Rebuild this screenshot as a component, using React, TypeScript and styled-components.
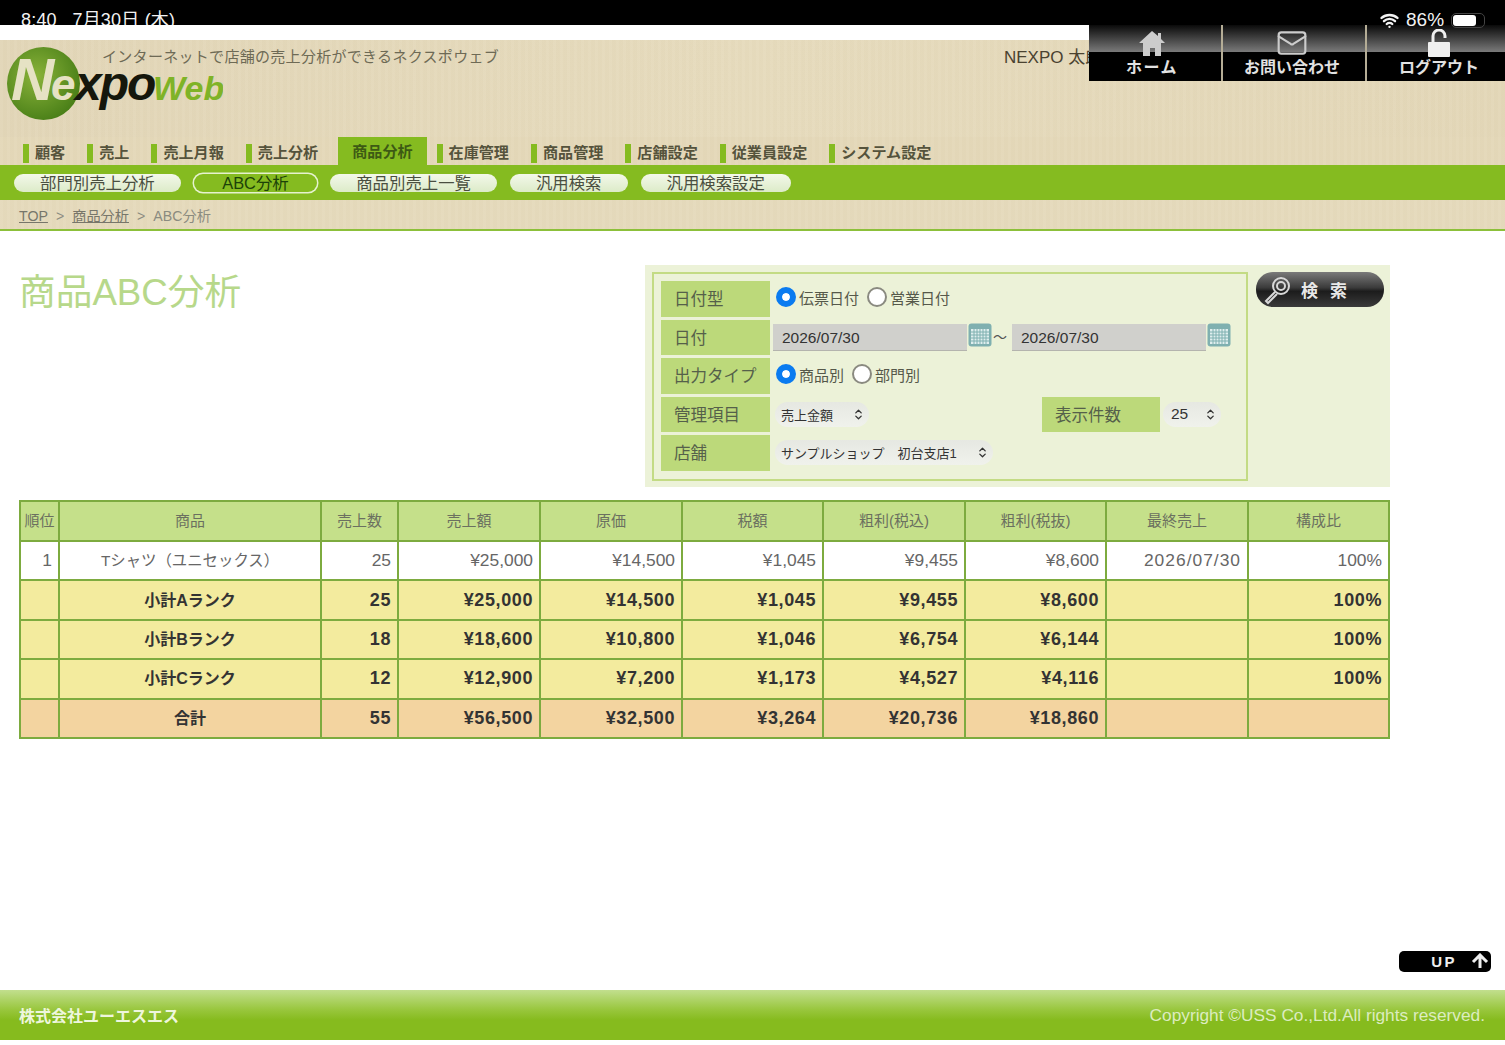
import React from "react";
import styled, { createGlobalStyle } from "styled-components";
import { ChevronsUpDown, Mail, Wifi } from "lucide-react";

const Global = createGlobalStyle`
  html, body { margin: 0; padding: 0; background: #fff; }
  body { font-family: "Liberation Sans", "Noto Sans CJK JP", sans-serif; }
`;

const paper = `repeating-linear-gradient(90deg, rgba(255,255,255,0.025) 0 3px, rgba(120,100,50,0.012) 3px 7px)`;

const Page = styled.div`
  position: relative;
  width: 1505px;
  height: 1045px;
  overflow: hidden;
  display: flex;
  flex-direction: column;
`;
const StatusBar = styled.div`
  height: 25px;
  background: #000;
  color: #f2f2f2;
  font-size: 18px;
  letter-spacing: 0.2px;
  line-height: 20px;
  padding: 10px 0 0 21px;
  box-sizing: border-box;
  overflow: hidden;
  white-space: pre;
`;
const StatusRight = styled.div`
  position: absolute;
  top: 10px;
  left: 1380px;
  display: flex;
  align-items: center;
  gap: 7px;
  color: #f2f2f2;
  font-size: 19px;
  line-height: 20px;
  z-index: 3;
`;
const Battery = styled.span`
  width: 34px;
  height: 15px;
  border: 1px solid #444;
  border-radius: 5px;
  padding: 1px;
  box-sizing: border-box;
  &::before {
    content: "";
    display: block;
    width: 23px;
    height: 11px;
    background: #fff;
    border-radius: 3px;
  }
`;
const WhiteStrip = styled.div`
  height: 15px;
  background: #fff;
`;
const Header = styled.header`
  height: 97px;
  background: ${paper}, linear-gradient(90deg, #e2d6b8, #e6dbbd 50%, #e3d7b8);
  padding: 7px 0 0 7px;
  box-sizing: border-box;
  display: flex;
`;
const Logo = styled.svg`
  width: 216px;
  height: 74px;
  flex: none;
  margin-right: -121px;
`;
const Tagline = styled.div`
  font-size: 15px;
  line-height: 20px;
  color: #6e6a55;
  letter-spacing: 0.3px;
  white-space: nowrap;
  width: 902px;
`;
const UserName = styled.div`
  font-size: 17px;
  line-height: 22px;
  color: #4a4230;
  white-space: nowrap;
`;
const TopNav = styled.nav`
  position: absolute;
  top: 25px;
  left: 1089px;
  width: 416px;
  height: 56px;
  display: flex;
  gap: 2px;
  background: #b5ad96;
  z-index: 2;
`;
const TopNavItem = styled.a<{ $w: number; $shift?: number; $ls?: number }>`
  width: ${(p) => p.$w}px;
  background: linear-gradient(#0a0a0a, #7a7a7a 48%, #000 49%, #000);
  color: #e2e2e2;
  font-size: 16px;
  font-weight: 700;
  letter-spacing: ${(p) => p.$ls ?? 0}px;
  line-height: 20px;
  display: flex;
  flex-direction: column;
  align-items: center;
  justify-content: flex-end;
  padding-bottom: 3px;
  padding-left: ${(p) => Math.max(p.$shift ?? 0, 0)}px;
  padding-right: ${(p) => Math.max(-(p.$shift ?? 0), 0)}px;
  box-sizing: border-box;
`;
const NavIcon = styled.svg`
  width: 32px;
  height: 30px;
  margin-bottom: -1px;
`;
const TabBar = styled.div`
  height: 28px;
  background: ${paper}, #e4d8b9;
  display: flex;
  gap: 22px;
  padding-left: 23px;
  align-items: flex-end;
`;
const Tab = styled.a<{ $active?: boolean }>`
  height: ${(p) => (p.$active ? 28 : 21)}px;
  display: flex;
  align-items: ${(p) => (p.$active ? "center" : "flex-start")};
  font-size: 15.1px;
  font-weight: 700;
  line-height: 17px;
  color: #55533c;
  white-space: nowrap;
  ${(p) =>
    p.$active
      ? `background: #85bb20; color: #3d5a14; padding: 0 14px; margin: 0 -12px 0 -2px;`
      : `&::before {
          content: "";
          width: 6px;
          height: 19px;
          margin-right: 6px;
          background: #85bb20;
        }`}
`;
const SubNav = styled.div`
  height: 35px;
  background: #85bb20;
  display: flex;
  gap: 13px;
  padding: 9px 0 0 14px;
  box-sizing: border-box;
`;
const Pill = styled.a<{ $active?: boolean }>`
  height: 18px;
  padding: 0 ${(p) => (p.$active ? 28.5 : 26)}px;
  border-radius: 9px;
  box-sizing: border-box;
  font-size: 16.4px;
  line-height: 18px;
  white-space: nowrap;
  color: ${(p) => (p.$active ? "#1c4208" : "#4a4f40")};
  background: ${(p) => (p.$active ? "#85bb20" : "linear-gradient(#f3f8ea, #dcebc8)")};
  ${(p) => p.$active && "box-shadow: 0 0 0 1.5px #e6f2cf;"}
`;
const Breadcrumb = styled.div`
  height: 31px;
  background: ${paper}, #e5dabc;
  border-bottom: 2px solid #8cc03a;
  box-sizing: border-box;
  padding: 6px 0 0 19px;
  font-size: 14.2px;
  line-height: 20px;
  color: #8b8b80;
  display: flex;
  gap: 8px;
  a { text-decoration: underline; color: #77766a; }
`;
const Main = styled.main`
  padding: 34px 115px 0 19px;
  display: flex;
  flex-direction: column;
  gap: 13px;
`;
const TopRow = styled.div`
  display: flex;
  justify-content: space-between;
`;
const Title = styled.h1`
  margin: 6px 0 0;
  font-size: 36.7px;
  line-height: 44px;
  font-weight: 400;
  color: #b7d88a;
`;
const SearchPanel = styled.div`
  width: 745px;
  height: 222px;
  background: #ecf2d8;
  padding: 7px 6px 6px 7px;
  box-sizing: border-box;
  display: flex;
  gap: 8px;
`;
const SearchBox = styled.div`
  width: 596px;
  border: 2px solid #c3db84;
  box-sizing: border-box;
  padding: 7px 0 0 7px;
  display: flex;
  flex-direction: column;
  gap: 3px;
`;
const FormRow = styled.div`
  height: 35.5px;
  display: flex;
  align-items: center;
`;
const Label = styled.div<{ $w?: number; $ml?: number }>`
  width: ${(p) => p.$w ?? 109}px;
  height: 100%;
  flex: none;
  margin-left: ${(p) => p.$ml ?? 0}px;
  background: #bcd97a;
  color: #55604a;
  font-size: 16.5px;
  line-height: 37px;
  padding-left: 13px;
  box-sizing: border-box;
  white-space: nowrap;
`;
const RadioGroup = styled.div`
  display: flex;
  align-items: center;
  margin: -3px 0 0 6px;
  font-size: 15px;
  color: #55584a;
`;
const Radio = styled.span<{ $on?: boolean }>`
  width: 20px;
  height: 20px;
  border-radius: 50%;
  box-sizing: border-box;
  margin-right: 3px;
  background: ${(p) => (p.$on ? "#0a7bf0" : "#fff")};
  border: ${(p) => (p.$on ? "6px solid #0a7bf0" : "2px solid #8a8a80")};
  ${(p) => p.$on && "box-shadow: inset 0 0 0 4px #fff;"}
`;
const RadioText = styled.span`
  margin-right: 8px;
`;
const DateInput = styled.div`
  width: 194px;
  height: 27px;
  margin-left: 3px;
  background: #d0d0cc;
  border-bottom: 1px solid #b4b4ae;
  box-sizing: border-box;
  padding-left: 9px;
  font-size: 15.5px;
  line-height: 27px;
  color: #333;
`;
const CalendarIcon = styled.svg`
  width: 24px;
  height: 24px;
  margin: -5px 0 0 1px;
  flex: none;
`;
const Tilde = styled.span`
  width: 17px;
  margin-left: 1px;
  margin-right: -1px;
  font-size: 14px;
  line-height: 20px;
  color: #555;
`;
const SelectPill = styled.div<{ $w: number; $ml?: number; $fs?: number; $pl?: number }>`
  width: ${(p) => p.$w}px;
  height: 25px;
  margin-left: ${(p) => p.$ml ?? 5}px;
  border-radius: 12.5px;
  background: linear-gradient(#e6e8e2, #f0f2ec);
  padding: 0 4px 0 ${(p) => p.$pl ?? 6}px;
  box-sizing: border-box;
  display: flex;
  align-items: center;
  justify-content: space-between;
  font-size: ${(p) => p.$fs ?? 13}px;
  color: #333;
  white-space: pre;
`;
const SearchButton = styled.button`
  width: 128px;
  height: 35px;
  border: none;
  border-radius: 17px;
  background: linear-gradient(#7a7a7a, #3a3a3a 45%, #1c1c1c 55%, #3a3a3a);
  color: #e8e8e8;
  font: 700 17px "Liberation Sans", "Noto Sans CJK JP", sans-serif;
  letter-spacing: 12px;
  display: flex;
  align-items: center;
  padding: 0 0 0 6px;
  gap: 9px;
`;
const Table = styled.table`
  width: 1369px;
  border-collapse: collapse;
  table-layout: fixed;
`;
const Th = styled.th<{ $w: number }>`
  width: ${(p) => p.$w}px;
  height: 40px;
  padding: 0 0 3px;
  background: #c5e08a;
  border: 2px solid #7dab3f;
  font-size: 15px;
  font-weight: 400;
  color: #6b7060;
  text-align: center;
  box-sizing: border-box;
`;
const Tr = styled.tr<{ $kind: "row" | "sub" | "total" }>`
  background: ${(p) => (p.$kind === "row" ? "#fff" : p.$kind === "sub" ? "#f3eb9e" : "#f3d4a0")};
  td {
    font-weight: ${(p) => (p.$kind === "row" ? 400 : 700)};
    color: ${(p) => (p.$kind === "row" ? "#666" : "#333")};
    font-size: ${(p) => (p.$kind === "row" ? 17.4 : 18)}px;
    letter-spacing: ${(p) => (p.$kind === "row" ? 0 : 0.6)}px;
  }
  td.name {
    font-size: ${(p) => (p.$kind === "row" ? 15.4 : 16)}px;
    letter-spacing: 0;
    padding-bottom: 3px;
  }
  td.date {
    letter-spacing: 1px;
  }
`;
const Td = styled.td<{ $center?: boolean }>`
  height: 39.4px;
  padding: 0 6px;
  border: 2px solid #7dab3f;
  text-align: ${(p) => (p.$center ? "center" : "right")};
  box-sizing: border-box;
  white-space: nowrap;
`;
const UpButton = styled.a`
  align-self: flex-end;
  width: 92px;
  height: 21px;
  margin: 212px 14px 0 0;
  border-radius: 5px;
  background: #000;
  color: #eee;
  font-size: 15px;
  font-weight: 700;
  letter-spacing: 2.5px;
  line-height: 21px;
  display: flex;
  align-items: center;
  justify-content: flex-end;
  gap: 13px;
  padding-right: 1px;
  box-sizing: border-box;
`;
const Footer = styled.footer`
  height: 50px;
  margin-top: 18px;
  background: linear-gradient(#c2df8e, #98c63c 40%, #86bb1e 60%);
  padding: 1px 20px 0 19px;
  box-sizing: border-box;
  display: flex;
  align-items: center;
  justify-content: space-between;
`;
const Company = styled.div`
  font-size: 16px;
  font-weight: 700;
  color: #eef6dd;
`;
const Copyright = styled.div`
  font-size: 17.3px;
  color: #dcecc0;
`;

const columns = [
  ["順位", 39], ["商品", 262], ["売上数", 77], ["売上額", 142], ["原価", 142],
  ["税額", 141], ["粗利(税込)", 142], ["粗利(税抜)", 141], ["最終売上", 142], ["構成比", 141],
] as const;

const rows: { kind: "row" | "sub" | "total"; cells: string[] }[] = [
  { kind: "row", cells: ["1", "Tシャツ（ユニセックス）", "25", "¥25,000", "¥14,500", "¥1,045", "¥9,455", "¥8,600", "2026/07/30", "100%"] },
  { kind: "sub", cells: ["", "小計Aランク", "25", "¥25,000", "¥14,500", "¥1,045", "¥9,455", "¥8,600", "", "100%"] },
  { kind: "sub", cells: ["", "小計Bランク", "18", "¥18,600", "¥10,800", "¥1,046", "¥6,754", "¥6,144", "", "100%"] },
  { kind: "sub", cells: ["", "小計Cランク", "12", "¥12,900", "¥7,200", "¥1,173", "¥4,527", "¥4,116", "", "100%"] },
  { kind: "total", cells: ["", "合計", "55", "¥56,500", "¥32,500", "¥3,264", "¥20,736", "¥18,860", "", ""] },
];

const tabs = ["顧客", "売上", "売上月報", "売上分析", "商品分析", "在庫管理", "商品管理", "店舗設定", "従業員設定", "システム設定"];
const subNav = ["部門別売上分析", "ABC分析", "商品別売上一覧", "汎用検索", "汎用検索設定"];

const Calendar = () => (
  <CalendarIcon viewBox="0 0 24 24">
    <rect x="0.5" y="0.5" width="23" height="23" rx="3" fill="#7fb0b0" />
    <rect x="3" y="6" width="18" height="15" fill="#dfeeee" />
    <path d="M3 9h18M3 12h18M3 15h18M3 18h18M6 6v15M9 6v15M12 6v15M15 6v15M18 6v15" stroke="#7fb0b0" strokeWidth="1" />
  </CalendarIcon>
);

const App: React.FC = () => {
  return (
    <Page>
      <Global />
      <StatusBar>8:40   7月30日 (木)</StatusBar>
      <StatusRight>
        <Wifi size={19} strokeWidth={3} />
        <span>86%</span>
        <Battery />
      </StatusRight>
      <WhiteStrip />
      <Header>
        <Logo viewBox="0 0 216 74">
          <defs>
            <radialGradient id="ball" cx="0.4" cy="0.4" r="0.7">
              <stop offset="0" stopColor="#8ab33a" />
              <stop offset="1" stopColor="#437a14" />
            </radialGradient>
          </defs>
          <circle cx="36.5" cy="36.5" r="36.5" fill="url(#ball)" />
          <text x="4" y="53" fontFamily="Liberation Sans" fontStyle="italic" fontWeight="700" fontSize="60" fill="#e6e2c4">N</text>
          <text x="44" y="53" fontFamily="Liberation Sans" fontStyle="italic" fontWeight="700" fontSize="44" fill="#e6e2c4">e</text>
          <text x="68" y="53" fontFamily="Liberation Sans" fontStyle="italic" fontWeight="700" fontSize="48" fill="#15170c" letterSpacing="-2">xpo</text>
          <text x="146" y="53" fontFamily="Liberation Sans" fontStyle="italic" fontWeight="700" fontSize="34" fill="#7fb327">Web</text>
        </Logo>
        <Tagline>インターネットで店舗の売上分析ができるネクスポウェブ</Tagline>
        <UserName>NEXPO 太郎</UserName>
      </Header>
      <TopNav>
        <TopNavItem $w={132} $shift={-6} $ls={1.5}>
          <NavIcon viewBox="0 0 32 30">
            <path d="M16 2 3 14h4v13h7v-8h5v8h6V14h4l-4-4V4h-3v3z" fill="#ccc" />
          </NavIcon>
          ホーム
        </TopNavItem>
        <TopNavItem $w={142} $shift={-4}>
          <Mail size={32} strokeWidth={1.6} color="#ccc" style={{ marginBottom: -1 }} />
          お問い合わせ
        </TopNavItem>
        <TopNavItem $w={138} $shift={6}>
          <NavIcon viewBox="0 0 32 30">
            <path d="M10 13V7a6 6 0 0 1 12 0v2" fill="none" stroke="#eee" strokeWidth="3" />
            <rect x="5" y="13" width="22" height="15" rx="1" fill="#f0f0f0" />
          </NavIcon>
          ログアウト
        </TopNavItem>
      </TopNav>
      <TabBar>
        {tabs.map((t) => (
          <Tab key={t} $active={t === "商品分析"}>{t}</Tab>
        ))}
      </TabBar>
      <SubNav>
        {subNav.map((s) => (
          <Pill key={s} $active={s === "ABC分析"}>{s}</Pill>
        ))}
      </SubNav>
      <Breadcrumb>
        <a>TOP</a>
        <span>&gt;</span>
        <a>商品分析</a>
        <span>&gt;</span>
        <span>ABC分析</span>
      </Breadcrumb>
      <Main>
        <TopRow>
          <Title>商品ABC分析</Title>
          <SearchPanel>
            <SearchBox>
              <FormRow>
                <Label>日付型</Label>
                <RadioGroup>
                  <Radio $on />
                  <RadioText>伝票日付</RadioText>
                  <Radio />
                  <RadioText>営業日付</RadioText>
                </RadioGroup>
              </FormRow>
              <FormRow>
                <Label>日付</Label>
                <DateInput>2026/07/30</DateInput>
                <Calendar />
                <Tilde>〜</Tilde>
                <DateInput>2026/07/30</DateInput>
                <Calendar />
              </FormRow>
              <FormRow>
                <Label>出力タイプ</Label>
                <RadioGroup>
                  <Radio $on />
                  <RadioText>商品別</RadioText>
                  <Radio />
                  <RadioText>部門別</RadioText>
                </RadioGroup>
              </FormRow>
              <FormRow>
                <Label>管理項目</Label>
                <SelectPill $w={94}>売上金額<ChevronsUpDown size={13} strokeWidth={2.4} /></SelectPill>
                <Label $w={118} $ml={173}>表示件数</Label>
                <SelectPill $w={58} $ml={3} $fs={15.5} $pl={8}>25<ChevronsUpDown size={13} strokeWidth={2.4} /></SelectPill>
              </FormRow>
              <FormRow>
                <Label>店舗</Label>
                <SelectPill $w={218}>サンプルショップ　初台支店1<ChevronsUpDown size={13} strokeWidth={2.4} /></SelectPill>
              </FormRow>
            </SearchBox>
            <SearchButton>
              <svg width="30" height="30" viewBox="0 0 30 30" fill="none" stroke="#d8d8d8" strokeWidth="2">
                <circle cx="19" cy="11" r="8" />
                <circle cx="19" cy="11" r="4" />
                <path d="M13 17 4 26l2 2 9-9" />
              </svg>
              検索
            </SearchButton>
          </SearchPanel>
        </TopRow>
        <Table>
          <thead>
            <tr>
              {columns.map(([name, w]) => (
                <Th key={name} $w={w}>{name}</Th>
              ))}
            </tr>
          </thead>
          <tbody>
            {rows.map((r) => (
              <Tr key={r.cells[1]} $kind={r.kind}>
                {r.cells.map((c, i) => (
                  <Td
                    key={i}
                    $center={i === 1}
                    className={i === 1 ? "name" : i === 8 ? "date" : undefined}
                  >
                    {c}
                  </Td>
                ))}
              </Tr>
            ))}
          </tbody>
        </Table>
      </Main>
      <UpButton>
        UP
        <svg width="20" height="16" viewBox="0 0 20 16" fill="none" stroke="#eee" strokeWidth="3">
          <path d="M10 15V3M3 9l7-7 7 7" />
        </svg>
      </UpButton>
      <Footer>
        <Company>株式会社ユーエスエス</Company>
        <Copyright>Copyright ©USS Co.,Ltd.All rights reserved.</Copyright>
      </Footer>
    </Page>
  );
};

export default App;
